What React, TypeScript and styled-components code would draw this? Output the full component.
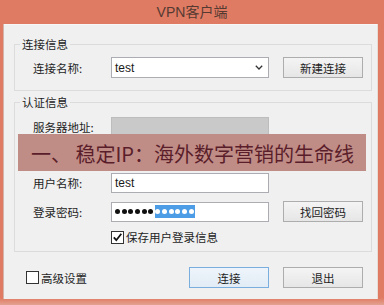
import React from "react";
import styled, { createGlobalStyle } from "styled-components";

const GlobalStyle = createGlobalStyle`
  html, body { margin: 0; padding: 0; }
  body {
    width: 384px;
    height: 305px;
    overflow: hidden;
    background: #e07b63;
    font-family: "Noto Sans CJK SC", sans-serif;
  }
`;

const Frame = styled.div`
  position: relative;
  width: 384px;
  height: 305px;
  display: flex;
  flex-direction: column;
  background: linear-gradient(#e07b63 0, #e07b63 298px, #e3a291 305px);
`;

const TitleBar = styled.div`
  height: 24px;
  display: flex;
  align-items: center;
  justify-content: center;
  font-family: "Liberation Sans", "Noto Sans CJK SC", sans-serif;
  font-size: 14px;
  line-height: 1;
  color: #553a32;
  padding-bottom: 1px;
  box-sizing: border-box;
`;

const WindowBody = styled.div`
  margin-left: 3px;
  width: 375px;
  height: 275px;
  background: #f0f0f0;
  box-shadow: inset 1px 0 0 #d4b4a8, inset -1px 0 0 #e9dcd7, inset 0 1px 0 #f7f7f7;
  display: flex;
  flex-direction: column;
`;

const Group = styled.fieldset<{ $top: number; $pt: number; $pb: number }>`
  margin: ${(p) => p.$top}px 6px 0 11px;
  padding: ${(p) => p.$pt}px 8px ${(p) => p.$pb}px 18px;
  border: 1px solid #dcdcdc;
  min-width: 0;
  display: flex;
  flex-direction: column;
  gap: 8px;
`;

const Legend = styled.legend`
  margin-left: -13px;
  padding: 0 2px;
  font-size: 11.5px;
  line-height: 16px;
  color: #1e1e1e;
`;

const Row = styled.div<{ $h: number }>`
  display: grid;
  grid-template-columns: 64px 158px 80px;
  column-gap: 14px;
  align-items: center;
  height: ${(p) => p.$h}px;
`;

const Label = styled.span`
  font-size: 11.5px;
  line-height: 16px;
  color: #1e1e1e;
  white-space: nowrap;
`;

const TextBox = styled.div<{ $disabled?: boolean }>`
  box-sizing: border-box;
  height: 20px;
  border: 1px solid ${(p) => (p.$disabled ? "#bdbdbd" : "#abadb3")};
  background: ${(p) => (p.$disabled ? "#c9c9c9" : "#ffffff")};
  display: flex;
  align-items: center;
  padding-left: 3px;
  font-family: "Liberation Sans", sans-serif;
  font-size: 12px;
  color: #1a1a1a;
`;

const Combo = styled(TextBox)`
  height: 21px;
  justify-content: space-between;
  padding-right: 5px;
`;

const Button = styled.div<{ $primary?: boolean }>`
  box-sizing: border-box;
  height: 21px;
  border: 1px solid ${(p) => (p.$primary ? "#7aaede" : "#adadad")};
  background: ${(p) =>
    p.$primary
      ? "linear-gradient(#eef4fa, #e2ecf6)"
      : "linear-gradient(#f4f4f4, #e6e6e6)"};
  display: flex;
  align-items: center;
  justify-content: center;
  font-size: 11.5px;
  color: #1e1e1e;
`;

const Dots = styled.span<{ $selected?: boolean }>`
  display: inline-flex;
  align-items: center;
  height: 13px;
  background: ${(p) => (p.$selected ? "#4d9de6" : "transparent")};
`;

const Dot = styled.span<{ $light?: boolean }>`
  width: 5px;
  height: 5px;
  margin-right: 1.7px;
  border-radius: 50%;
  background: ${(p) => (p.$light ? "#ffffff" : "#111111")};
`;

const CheckLine = styled.label<{ $indent: number }>`
  display: flex;
  align-items: center;
  gap: 2px;
  margin-left: ${(p) => p.$indent}px;
  font-size: 11.5px;
  line-height: 16px;
  color: #1e1e1e;
`;

const Box = styled.span`
  box-sizing: border-box;
  width: 13px;
  height: 13px;
  border: 1px solid #333333;
  background: #ffffff;
  display: flex;
  align-items: center;
  justify-content: center;
`;

const HiddenRow = styled.div`
  height: 20px;
`;

const BottomBar = styled.div`
  margin-top: 15px;
  height: 21px;
  padding: 0 15px 0 23px;
  display: flex;
  align-items: center;
`;

const BottomButtons = styled.div`
  margin-left: auto;
  display: grid;
  grid-template-columns: 80px 80px;
  column-gap: 14px;
`;

const Banner = styled.div`
  position: absolute;
  left: 18px;
  top: 134px;
  width: 348px;
  height: 37px;
  box-sizing: border-box;
  background: #c08c86;
  padding: 3px 0 0 13px;
  display: flex;
  align-items: center;
  font-family: "Noto Sans CJK SC", sans-serif;
  font-size: 20px;
  line-height: 24px;
  color: #5a1e2b;
  white-space: pre;
`;

const Chevron = () => (
  <svg width="8" height="5" viewBox="0 0 8 5">
    <path d="M0.8 0.8 L4 4 L7.2 0.8" fill="none" stroke="#333" strokeWidth="1.3" />
  </svg>
);

const Check = () => (
  <svg width="11" height="11" viewBox="0 0 11 11">
    <path d="M1.8 5.4 L4.3 8.2 L9.3 1.8" fill="none" stroke="#111" strokeWidth="1.8" />
  </svg>
);

export default function App() {
  return (
    <>
      <GlobalStyle />
      <Frame>
        <TitleBar>VPN客户端</TitleBar>
        <WindowBody>
          <Group $top={12} $pt={5} $pb={12}>
            <Legend>连接信息</Legend>
            <Row $h={21}>
              <Label>连接名称:</Label>
              <Combo>
                test
                <Chevron />
              </Combo>
              <Button>新建连接</Button>
            </Row>
          </Group>
          <Group $top={3} $pt={7} $pb={6}>
            <Legend>认证信息</Legend>
            <Row $h={20}>
              <Label>服务器地址:</Label>
              <TextBox $disabled />
            </Row>
            <HiddenRow />
            <Row $h={20}>
              <Label>用户名称:</Label>
              <TextBox>test</TextBox>
            </Row>
            <Row $h={20}>
              <Label>登录密码:</Label>
              <TextBox>
                <Dots>
                  {Array.from({ length: 6 }).map((_, i) => (
                    <Dot key={i} />
                  ))}
                </Dots>
                <Dots $selected>
                  {Array.from({ length: 6 }).map((_, i) => (
                    <Dot key={i} $light />
                  ))}
                </Dots>
              </TextBox>
              <Button>找回密码</Button>
            </Row>
            <CheckLine $indent={78}>
              <Box>
                <Check />
              </Box>
              保存用户登录信息
            </CheckLine>
          </Group>
          <BottomBar>
            <CheckLine $indent={0}>
              <Box />
              高级设置
            </CheckLine>
            <BottomButtons>
              <Button $primary>连接</Button>
              <Button>退出</Button>
            </BottomButtons>
          </BottomBar>
        </WindowBody>
        <Banner>{"一、 稳定IP：海外数字营销的生命线"}</Banner>
      </Frame>
    </>
  );
}
